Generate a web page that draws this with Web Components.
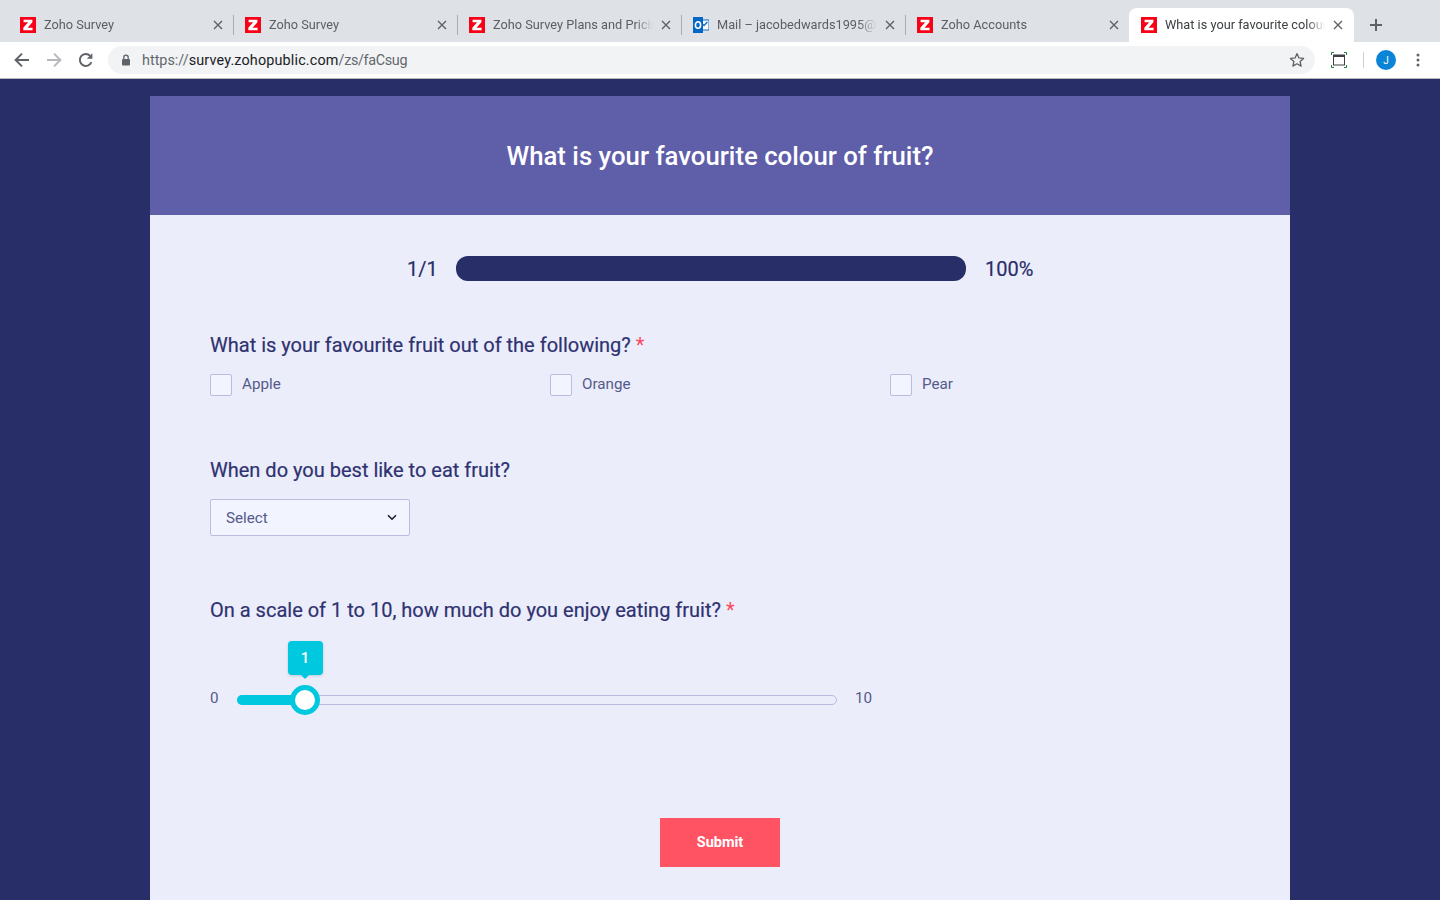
<!DOCTYPE html>
<html>
<head>
<meta charset="utf-8">
<title>Zoho Survey</title>
<style>
html,body{margin:0;padding:0;height:900px;overflow:hidden;background:#282e68;font-family:Roboto,"Liberation Sans",sans-serif;}
</style>
</head>
<body>
<browser-chrome></browser-chrome>
<survey-page></survey-page>

<script>
const zohoIcon = `<svg width="16" height="16" viewBox="0 0 16 16"><rect width="16" height="16" fill="#fa0017"/><path d="M3.600 2.800h8.800v2.500L7.600 10.700h5v2.500H3.300v-2.400l4.900-5.500H3.600z" fill="#fff"/></svg>`;
const outlookIcon = `<svg width="16" height="16" viewBox="0 0 16 16"><rect x="5" y="3" width="11" height="10" fill="#fff" stroke="#0a6fc9"/><path d="M9 6.500l2 2 3.400-3.600" fill="none" stroke="#0a6fc9" stroke-width="1.400"/><rect width="10" height="16" fill="#0567c4"/><ellipse cx="5" cy="8" rx="2.600" ry="3.300" fill="none" stroke="#fff" stroke-width="1.600"/></svg>`;

class BrowserTab extends HTMLElement{
    constructor(){
        super();
        this.attachShadow({mode:'open'});
        const icon = this.getAttribute('icon') == 'outlook' ? outlookIcon : zohoIcon;
        this.shadowRoot.innerHTML = `
<style>
:host{display:block;width:224px;height:34px;box-sizing:border-box;position:relative;flex:none;}
.tab{display:flex;align-items:center;height:34px;padding:0 10px 0 11px;box-sizing:border-box;}
:host([active]) .tab{width:225px;margin-left:-1px;padding-left:12px;background:#fff;border-radius:8px 8px 0 0;}
.icon{width:16px;height:16px;flex:none;margin-right:8px;}
.label{flex:1;min-width:0;white-space:nowrap;overflow:hidden;font-size:12.750px;line-height:16px;padding-bottom:1px;color:#5b5e63;
  -webkit-mask-image:linear-gradient(to left,transparent 0,#000 18px);mask-image:linear-gradient(to left,transparent 0,#000 18px);}
:host([active]) .label{color:#3c4043;}
.close{width:10px;height:10px;flex:none;margin-left:8px;margin-right:1px;}
.sep{position:absolute;right:0;top:7px;width:1px;height:20px;background:#a9adb2;}
:host([active]) .sep,:host([nosep]) .sep{display:none;}
</style>
<div class="tab">
  <div class="icon">${icon}</div>
  <div class="label"><slot></slot></div>
  <svg class="close" viewBox="0 0 10 10"><path d="M1 1l8 8M9 1l-8 8" stroke="#5f6368" stroke-width="1.400" fill="none"/></svg>
</div>
<div class="sep"></div>`;
    }
}
window.customElements.define('browser-tab',BrowserTab);

class BrowserChrome extends HTMLElement{
    constructor(){
        super();
        this.attachShadow({mode:'open'});
        this.shadowRoot.innerHTML = `
<style>
:host{display:block;height:79px;font-family:Roboto,"Liberation Sans",sans-serif;}
.strip{height:42px;background:#dee1e6;display:flex;align-items:flex-end;padding-left:9px;box-sizing:border-box;}
.strip browser-tab:first-child{width:225px;}
.plus{width:14px;height:14px;margin:0 0 10px 15px;flex:none;}
.bar{height:36px;background:#fff;border-bottom:1px solid #b9b9b9;box-sizing:content-box;display:flex;align-items:center;}
.nav{width:16px;height:16px;flex:none;}
.omni{margin-left:14px;width:1207px;height:28px;border-radius:14px;background:#f1f3f4;display:flex;align-items:center;flex:none;box-sizing:border-box;padding-left:13px;}
.url{font-size:14.400px;color:#63686e;margin-left:11px;flex:1;white-space:nowrap;}
.url b{font-weight:400;color:#202124;letter-spacing:.15px;}
.url span{letter-spacing:-.35px;}
.vsep{width:1px;height:16px;background:#ccced1;flex:none;}
.avatar{width:20px;height:20px;border-radius:50%;background:#0a84d6;color:#fff;font-size:10px;display:flex;align-items:center;justify-content:center;flex:none;}
</style>
<div class="strip">
  <browser-tab>Zoho Survey</browser-tab>
  <browser-tab>Zoho Survey</browser-tab>
  <browser-tab>Zoho Survey Plans and Pricing</browser-tab>
  <browser-tab icon="outlook">Mail – jacobedwards1995@hotmail.com</browser-tab>
  <browser-tab nosep>Zoho Accounts</browser-tab>
  <browser-tab active>What is your favourite colour of fruit?</browser-tab>
  <svg class="plus" viewBox="0 0 14 14"><path d="M7 1v12M1 7h12" stroke="#5f6368" stroke-width="2" fill="none"/></svg>
</div>
<div class="bar">
  <svg class="nav" style="margin-left:14px" viewBox="0 0 16 16"><path d="M15 8H2M8 1.600L1.600 8 8 14.400" stroke="#5f6368" stroke-width="2" fill="none"/></svg>
  <svg class="nav" style="margin-left:16px" viewBox="0 0 16 16"><path d="M1 8h13M8 1.600L14.400 8 8 14.400" stroke="#b7b9bc" stroke-width="2" fill="none"/></svg>
  <svg class="nav" style="margin-left:16px" viewBox="0 0 16 16"><path d="M13.400 10.200A6 6 0 1 1 12.200 3.800" stroke="#5f6368" stroke-width="1.900" fill="none"/><path d="M14.400 1.200v5.600H8.800z" fill="#5f6368"/></svg>
  <div class="omni">
    <svg width="10" height="12" viewBox="0 0 10 12" style="flex:none"><rect x="1" y="5" width="8" height="6.500" rx="1" fill="#5f6368"/><path d="M2.800 5.500V3.400a2.200 2.200 0 0 1 4.400 0v2.100" stroke="#5f6368" stroke-width="1.300" fill="none"/></svg>
    <div class="url">https://<b>survey.zohopublic.com</b><span>/zs/faCsug</span></div>
    <svg width="16" height="16" viewBox="0 0 16 16" style="flex:none;margin-right:10px"><path d="M8 1.600l1.900 4.300 4.700.5-3.500 3.100 1 4.600L8 11.800l-4.100 2.300 1-4.600L1.400 6.400l4.700-.5z" stroke="#5f6368" stroke-width="1.300" fill="none" stroke-linejoin="round"/></svg>
  </div>
  <svg width="16" height="16" viewBox="0 0 16 16" style="flex:none;margin-left:16px"><rect x="2.500" y="3" width="11" height="10" fill="none" stroke="#3c4043" stroke-width="1"/><rect x="2.500" y="3" width="11" height="2" fill="#3c4043"/><path d="M.5 3V.5H3M13 .5h2.500V3M.5 13v2.500H3M13 15.500h2.500V13" fill="none" stroke="#188038"/></svg>
  <div class="vsep" style="margin-left:16px"></div>
  <div class="avatar" style="margin-left:12px">J</div>
  <svg width="4" height="14" viewBox="0 0 4 14" style="flex:none;margin-left:20px"><circle cx="2" cy="2" r="1.500" fill="#5f6368"/><circle cx="2" cy="7" r="1.500" fill="#5f6368"/><circle cx="2" cy="12" r="1.500" fill="#5f6368"/></svg>
</div>`;
    }
}
window.customElements.define('browser-chrome',BrowserChrome);

class ProgressBar extends HTMLElement{
    constructor(){
        super();
        this.attachShadow({mode:'open'});
        this.shadowRoot.innerHTML = `
<style>
:host{display:flex;align-items:center;justify-content:center;height:25px;font-size:20px;color:#282e68;-webkit-text-stroke:.2px #282e68;}
.pages{width:49px;flex:none;text-align:left;}
.track{width:510px;height:25px;border-radius:12px;background:#282e68;flex:none;}
.pct{width:48px;flex:none;margin-left:19px;}
</style>
<div class="pages">1/1</div><div class="track"></div><div class="pct">100%</div>`;
    }
}
window.customElements.define('progress-bar',ProgressBar);

class SurveyQuestion extends HTMLElement{
    constructor(){
        super();
        this.attachShadow({mode:'open'});
        this.shadowRoot.innerHTML = `
<style>
:host{display:block;}
.q{font-size:20px;line-height:24px;color:#2f3270;-webkit-text-stroke:.2px #2f3270;}
.req{color:#f9495a;-webkit-text-stroke:0;}
:host(:not([required])) .req{display:none;}
</style>
<div class="q"><slot name="title"></slot> <span class="req">*</span></div>
<slot></slot>`;
    }
}
window.customElements.define('survey-question',SurveyQuestion);

class CheckOption extends HTMLElement{
    constructor(){
        super();
        this.attachShadow({mode:'open'});
        this.shadowRoot.innerHTML = `
<style>
:host{display:flex;align-items:flex-start;width:340px;font-size:15.200px;color:#555a8a;}
.box{width:22px;height:22px;box-sizing:border-box;border:1px solid #b9bde0;border-radius:2px;background:#f2f4ff;flex:none;margin-right:10px;}
.text{line-height:20px;}
</style>
<div class="box"></div><div class="text"><slot></slot></div>`;
    }
}
window.customElements.define('check-option',CheckOption);

class SelectBox extends HTMLElement{
    constructor(){
        super();
        this.attachShadow({mode:'open'});
        this.shadowRoot.innerHTML = `
<style>
:host{display:flex;align-items:center;justify-content:space-between;width:200px;height:37px;box-sizing:border-box;border:1px solid #b9bde0;border-radius:2px;background:#f2f4ff;padding:0 12px 0 15px;font-size:15.200px;color:#555a8a;}
svg{flex:none;}
</style>
<span><slot></slot></span>
<svg width="10" height="7" viewBox="0 0 10 7"><path d="M1 1.200l4 4 4-4" stroke="#1d1d2b" stroke-width="1.600" fill="none"/></svg>`;
    }
}
window.customElements.define('select-box',SelectBox);

class RangeSlider extends HTMLElement{
    constructor(){
        super();
        this.attachShadow({mode:'open'});
        this.shadowRoot.innerHTML = `
<style>
:host{display:flex;align-items:center;font-size:15.200px;color:#555a8a;height:30px;}
.min{width:27px;flex:none;position:relative;top:-2px;}
.max{margin-left:18px;flex:none;position:relative;top:-2px;}
.track{width:600px;height:10px;box-sizing:border-box;border:1px solid #b9bde0;border-radius:5px;flex:none;position:relative;}
.fill{position:absolute;left:-1px;top:-1px;width:68px;height:10px;border-radius:5px 0 0 5px;background:#00c8df;}
.thumb{position:absolute;left:52px;top:-11px;width:30px;height:30px;box-sizing:border-box;border:5px solid #00c8df;border-radius:50%;background:#fff;}
.tip{position:absolute;left:49.500px;top:-55px;width:35px;height:34px;border-radius:4px;background:#00c8df;color:#fff;font-size:15px;font-weight:500;display:flex;align-items:center;justify-content:center;box-shadow:0 1px 3px rgba(40,46,104,.2);}
.tip::after{content:"";position:absolute;left:50%;bottom:-4px;margin-left:-4px;border:4px solid transparent;border-bottom:0;border-top-color:#00c8df;}
</style>
<span class="min">0</span>
<div class="track"><div class="fill"></div><div class="thumb"></div><div class="tip">1</div></div>
<span class="max">10</span>`;
    }
}
window.customElements.define('range-slider',RangeSlider);

class SurveyPage extends HTMLElement{
    constructor(){
        super();
        this.attachShadow({mode:'open'});
        this.shadowRoot.innerHTML = `
<style>
:host{display:block;padding-top:17px;font-family:Roboto,"Liberation Sans",sans-serif;}
.card{width:1140px;height:804px;margin:0 auto;background:#ebedfb;}
header{height:119px;background:#5f5ea9;color:#fff;display:flex;align-items:center;justify-content:center;font-size:25.750px;font-weight:500;}
.body{padding:41px 60px 0;display:flex;flex-direction:column;}
.options{display:flex;margin-top:17px;}
select-box{margin-top:17px;}
range-slider{margin-top:63px;}
.q1{margin-top:52px;}
.q2{margin-top:62px;}
.q3{margin-top:62px;}
button{align-self:center;width:120px;height:49px;margin-top:103px;border:0;background:#ff5263;color:#fff;font:700 14.500px Roboto,"Liberation Sans",sans-serif;}
</style>
<div class="card">
  <header>What is your favourite colour of fruit?</header>
  <div class="body">
    <progress-bar></progress-bar>
    <survey-question class="q1" required>
      <span slot="title">What is your favourite fruit out of the following?</span>
      <div class="options">
        <check-option>Apple</check-option>
        <check-option>Orange</check-option>
        <check-option>Pear</check-option>
      </div>
    </survey-question>
    <survey-question class="q2">
      <span slot="title">When do you best like to eat fruit?</span>
      <select-box>Select</select-box>
    </survey-question>
    <survey-question class="q3" required>
      <span slot="title">On a scale of 1 to 10, how much do you enjoy eating fruit?</span>
      <range-slider></range-slider>
    </survey-question>
    <button>Submit</button>
  </div>
</div>`;
    }
}
window.customElements.define('survey-page',SurveyPage);
</script>
</body>
</html>
